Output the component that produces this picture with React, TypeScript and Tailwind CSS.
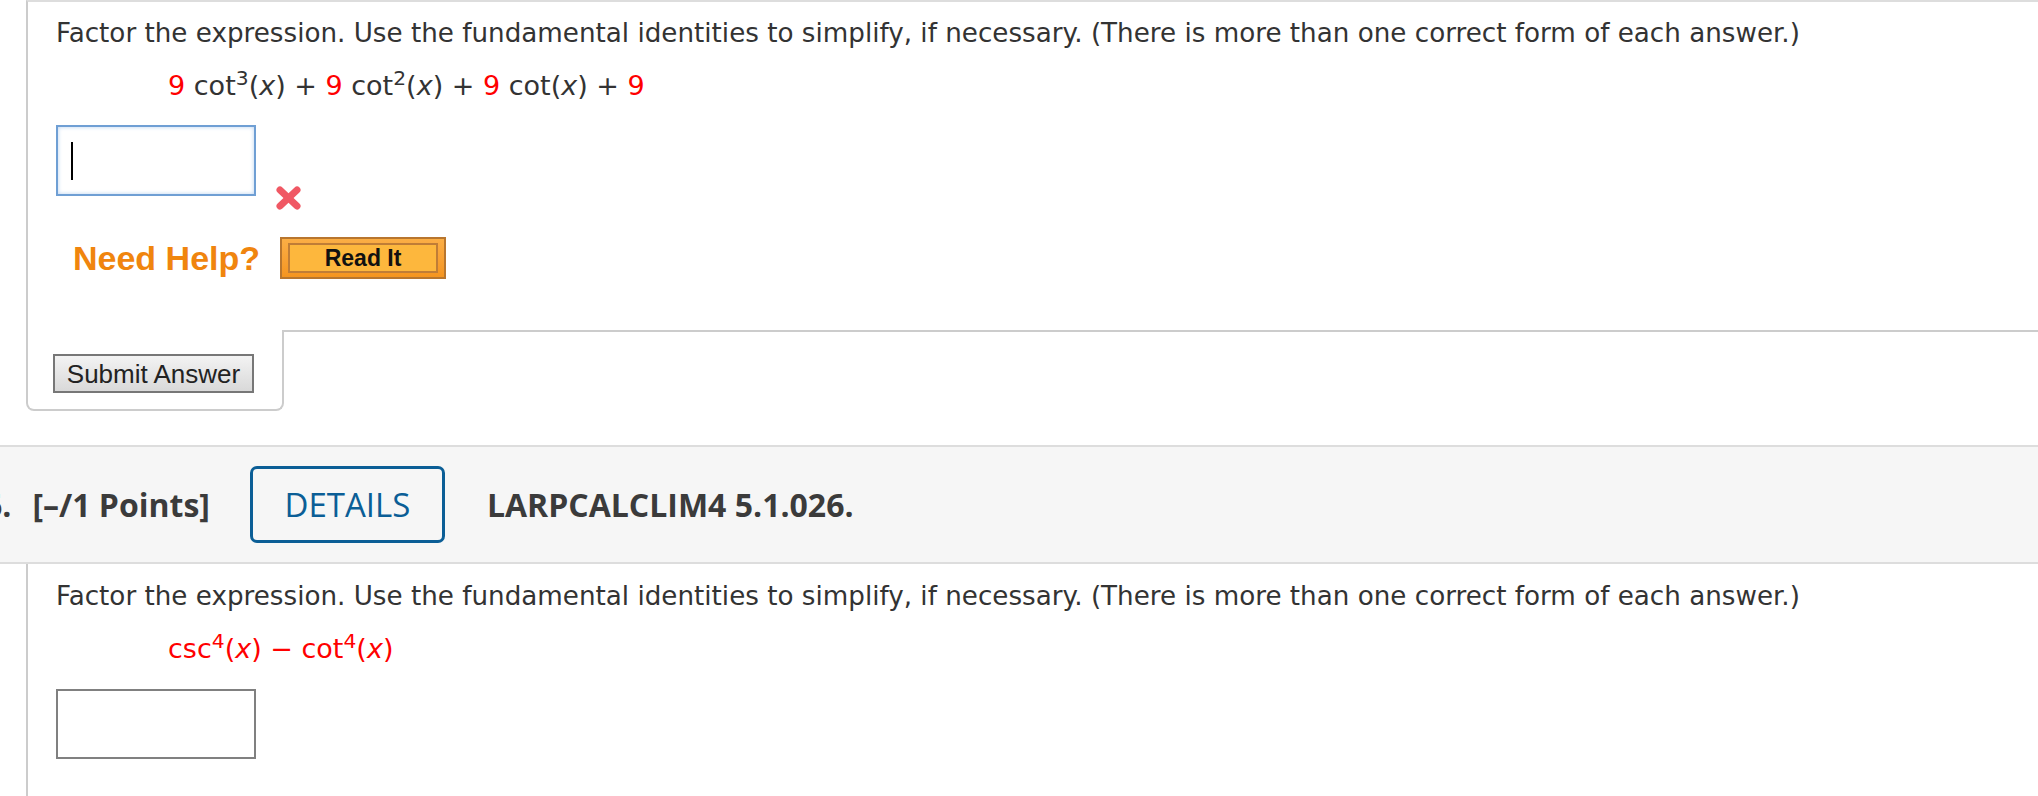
import React from "react";

const Q = "Factor the expression. Use the fundamental identities to simplify, if necessary. (There is more than one correct form of each answer.)";

function XMark() {
  return (
    <svg width="27" height="26" viewBox="0 0 27 26" className="ml-[19px] mt-[60px]">
      <g stroke="#f0505c" strokeWidth="7" strokeLinecap="round" opacity="0.95">
        <line x1="5" y1="5" x2="22" y2="21" />
        <line x1="22" y1="5" x2="5" y2="21" />
      </g>
    </svg>
  );
}

export default function App() {
  return (
    <div className="w-[2038px] h-[796px] overflow-hidden bg-white font-['DejaVu_Sans',sans-serif] text-[#333333]">
      {/* Question 1 */}
      <div className="ml-[26px] border-l-2 border-t-2 border-l-[#cccccc] border-t-[#dddddd] pl-[28px] pt-[16px] pb-[51px]">
        <p className="text-[26.2px] leading-[30px] whitespace-nowrap">{Q}</p>
        <p className="mt-[23px] ml-[112px] text-[27px] leading-[30px] whitespace-nowrap">
          <span className="text-[#ff0000]">9</span> cot<sup>3</sup>(<i>x</i>) + <span className="text-[#ff0000]">9</span> cot<sup>2</sup>(<i>x</i>) + <span className="text-[#ff0000]">9</span> cot(<i>x</i>) + <span className="text-[#ff0000]">9</span>
        </p>
        <div className="mt-[24px] flex items-start">
          <div className="w-[200px] h-[71px] border-2 border-[#6f9fd4] shadow-[inset_0_0_4px_#b9d2f0] flex items-center pl-[13px]">
            <span className="block w-[2px] h-[38px] bg-black" />
          </div>
          <XMark />
        </div>
        <div className="mt-[26px] flex items-center">
          <span className="ml-[17px] font-['Liberation_Sans',sans-serif] font-bold text-[34px] leading-[38px] text-[#f0850e]">Need Help?</span>
          <div className="ml-[20px] w-[166px] h-[42px] border-2 border-[#b8762e] bg-gradient-to-b from-[#fbae45] to-[#f5951f] px-[6px] py-[4px] flex">
            <div className="flex-1 border-2 border-[#c07d36] bg-[#fdb73d] flex items-center justify-center font-['Liberation_Sans',sans-serif] font-bold text-[23px] leading-none text-[#111]">
              Read It
            </div>
          </div>
        </div>
      </div>
      <div className="ml-[26px] flex">
        <div className="w-[258px] border-l-2 border-r-2 border-b-2 border-[#cccccc] rounded-b-[8px] pl-[25px] pt-[24px] pb-[16px]">
          <div className="w-[201px] h-[39px] border-2 border-[#777777] bg-gradient-to-b from-[#f3f3f3] to-[#d9d9d9] flex items-center justify-center font-['Liberation_Sans',sans-serif] text-[26px] leading-none text-[#222]">
            Submit Answer
          </div>
        </div>
        <div className="flex-1 border-t-2 border-[#cccccc]" />
      </div>

      {/* Header bar */}
      <div className="mt-[34px] h-[119px] border-y-2 border-[#dddddd] bg-[#f6f6f6] flex items-center font-['Open_Sans',sans-serif] whitespace-nowrap">
        <span className="-ml-[16px] font-bold text-[32px] text-[#3b3b3b]">6.</span>
        <span className="ml-[21px] font-bold text-[32px] text-[#3b3b3b]">[–/1 Points]</span>
        <div className="ml-[40px] w-[195px] h-[77px] border-[3px] border-[#0b5e96] rounded-[7px] flex items-center justify-center text-[33px] font-medium text-[#0b5e96]">
          DETAILS
        </div>
        <span className="ml-[42px] font-bold text-[32px] text-[#3b3b3b]">LARPCALCLIM4 5.1.026.</span>
      </div>

      {/* Question 2 */}
      <div className="ml-[26px] h-[232px] border-l-2 border-[#cccccc] pl-[28px] pt-[17px]">
        <p className="text-[26.2px] leading-[30px] whitespace-nowrap">{Q}</p>
        <p className="mt-[23px] ml-[112px] text-[27px] leading-[30px] whitespace-nowrap text-[#ff0000]">
          csc<sup>4</sup>(<i>x</i>) − cot<sup>4</sup>(<i>x</i>)
        </p>
        <div className="mt-[25px] w-[200px] h-[70px] border-2 border-[#808080]" />
      </div>
    </div>
  );
}
